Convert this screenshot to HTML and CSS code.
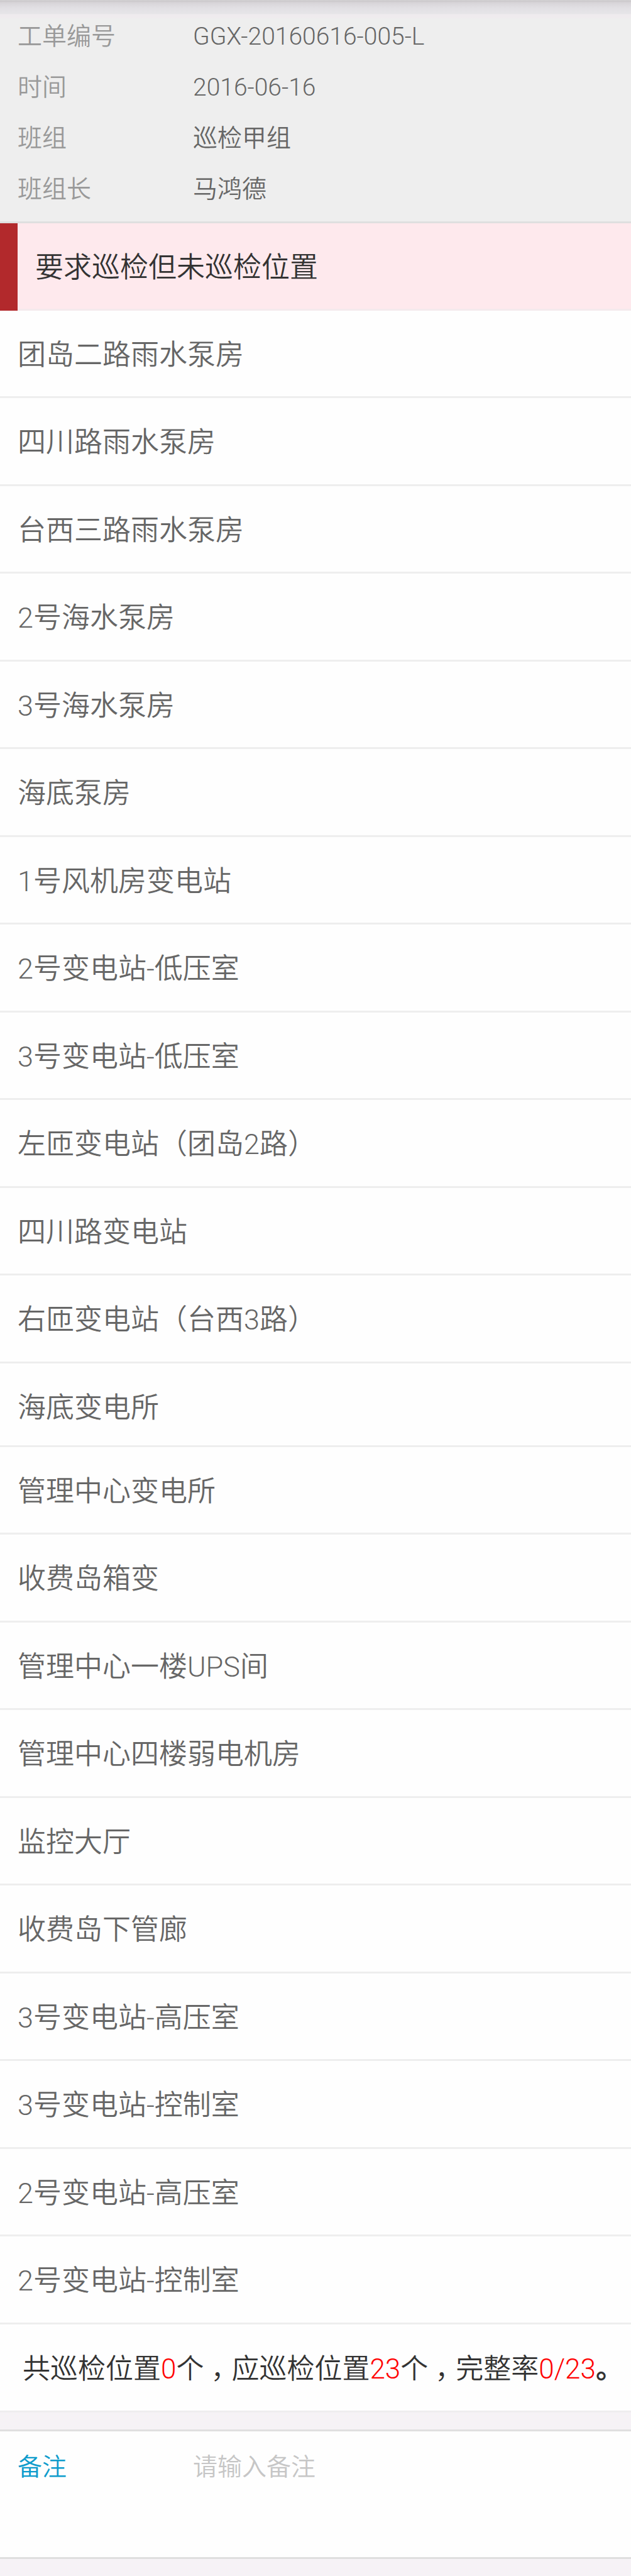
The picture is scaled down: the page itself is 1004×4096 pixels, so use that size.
FILE: index.html
```html
<!DOCTYPE html>
<html lang="zh-CN">
<head>
<meta charset="utf-8">
<meta name="viewport" content="width=device-width, initial-scale=1">
<title>巡检工单</title>
<link rel="stylesheet" href="styles.css">
</head>
<body>
<main class="page">
  <dl class="info">
    <div class="info-row"><dt>工单编号</dt><dd>GGX-20160616-005-L</dd></div>
    <div class="info-row"><dt>时间</dt><dd>2016-06-16</dd></div>
    <div class="info-row"><dt>班组</dt><dd>巡检甲组</dd></div>
    <div class="info-row"><dt>班组长</dt><dd>马鸿德</dd></div>
  </dl>
  <h1 class="section-title">要求巡检但未巡检位置</h1>
  <ul class="places">
    <li>团岛二路雨水泵房</li>
    <li>四川路雨水泵房</li>
    <li>台西三路雨水泵房</li>
    <li>2号海水泵房</li>
    <li>3号海水泵房</li>
    <li>海底泵房</li>
    <li>1号风机房变电站</li>
    <li>2号变电站-低压室</li>
    <li>3号变电站-低压室</li>
    <li>左匝变电站（团岛2路）</li>
    <li>四川路变电站</li>
    <li>右匝变电站（台西3路）</li>
    <li class="group-end">海底变电所</li>
  </ul>
  <ul class="places">
    <li>管理中心变电所</li>
    <li>收费岛箱变</li>
    <li>管理中心一楼UPS间</li>
    <li>管理中心四楼弱电机房</li>
    <li>监控大厅</li>
    <li>收费岛下管廊</li>
    <li>3号变电站-高压室</li>
    <li>3号变电站-控制室</li>
    <li>2号变电站-高压室</li>
    <li>2号变电站-控制室</li>
  </ul>
  <p class="summary">共巡检位置<em>0</em>个<span class="comma">，</span>应巡检位置<em>23</em>个<span class="comma">，</span>完整率<em>0/23</em><b>。</b></p>
  <div class="remark">
    <label for="remark">备注</label>
    <textarea id="remark" placeholder="请输入备注"></textarea>
  </div>
</main>
</body>
</html>
```
FILE: styles.css
```css
* {
  box-sizing: border-box;
}

body {
  margin: 0;
  background: #f6f2f6;
  color: #666;
  font-family: Roboto, "Noto Sans CJK SC", sans-serif;
  font-weight: 350;
  font-size: 45px;
  line-height: 60px;
}

.info {
  margin: 0;
  padding: 18px 28px 10px;
  border-bottom: 3px solid #dfdfdf;
  background: linear-gradient(#d5d3d5 0, #cac8ca 2px, #d7d4d8 4px, #e2e0e4 13px, #e6e5e8 22px, #efebee 23px, #efebee 27px, #eee 31px);
  font-size: 39px;
  line-height: 81px;
}

.info-row {
  display: flex;
}

.info dt,
.remark label {
  flex: 0 0 279px;
}

.info dt {
  color: #999;
}

.info dd {
  margin: 0;
}

.section-title {
  margin: 0;
  padding: 41px 28px 38px;
  border-left: 28px solid #b2292c;
  background: #fee9ed;
  box-shadow: inset 0 -3px #f4eaed;
  color: #333;
  font-size: 45px;
  font-weight: 350;
}

.places {
  margin: 0;
  padding: 0;
  background: #fefefe;
  list-style: none;
}

.places li {
  padding: 41px 28px 35px;
  border-bottom: 3px solid #eee;
}

.places li:nth-child(even) {
  padding-bottom: 36px;
}

.places .group-end {
  padding-bottom: 29px;
}

.summary {
  margin: 0 0 27px;
  padding: 41px 0 36px 36px;
  border-bottom: 3px solid #efedef;
  background: #fefefe;
  color: #333;
  font-size: 44px;
}

.summary em {
  color: #f00;
  font-style: normal;
}

/* Half-width comma centred in a full character cell */
.comma {
  display: inline-block;
  width: 1em;
  font-feature-settings: "halt";
  text-align: center;
}

.remark {
  display: flex;
  margin-bottom: 27px;
  padding: 17px 28px 12px;
  border: solid #dfdfdf;
  border-width: 3px 0;
  background: #fefefe;
  font-size: 39px;
  line-height: 81px;
}

.remark label {
  color: #0e9ccc;
}

.remark textarea {
  flex: 1;
  height: 171px;
  padding: 0;
  border: 0;
  outline: 0;
  background: none;
  color: #666;
  font: inherit;
  resize: none;
}

.remark textarea::placeholder {
  color: #c6c6c6;
}
```
